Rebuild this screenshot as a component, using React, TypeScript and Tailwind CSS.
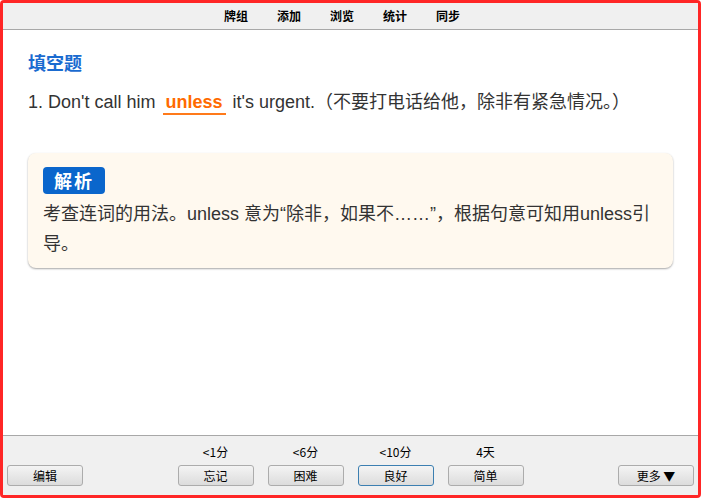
const tabs = ['牌组', '添加', '浏览', '统计', '同步'];

const answers = [
  { time: '<1分', label: '忘记' },
  { time: '<6分', label: '困难' },
  { time: '<10分', label: '良好', focus: true },
  { time: '4天', label: '简单' },
];

function Btn({ children, focus }: { children: React.ReactNode; focus?: boolean }) {
  return (
    <button
      className={
        'h-[21px] w-[76px] rounded-[3px] border bg-gradient-to-b from-[#f4f4f4] to-[#dcdcdc] text-[12px] leading-none text-black ' +
        (focus ? 'border-[#3c7fb1]' : 'border-[#acacac]')
      }
    >
      {children}
    </button>
  );
}

export default function App() {
  return (
    <div className="h-[501px] w-[704px] bg-white font-['Liberation_Sans','Noto_Sans_CJK_SC',sans-serif]">
      <div className="flex h-[498px] w-[701px] flex-col overflow-hidden rounded-[4px] border-[3px] border-[#ff2626] bg-white">
        <div className="flex h-[27px] shrink-0 items-center justify-center gap-[29px] border-b border-[#a8a8a8] bg-[#f0f0f0] pr-[17px] font-['Noto_Sans_CJK_SC',sans-serif] text-[12px] font-bold text-black">
          {tabs.map((t) => (
            <span key={t}>{t}</span>
          ))}
        </div>

        <div className="flex-1 px-[25px] pt-[20px]">
          <h3 className="font-['Noto_Sans_CJK_SC',sans-serif] text-[18px] font-bold leading-[24px] text-[#1a6bd0]">
            填空题
          </h3>
          <p className="mt-[15px] text-[18px] leading-[26px] text-[#333]">
            1. Don't call him{' '}
            <span className="mx-[2px] inline-block border-b-2 border-[#ff7a1a] px-[3px] font-bold leading-[22px] text-[#ff6a00]">
              unless
            </span>{' '}
            it's urgent.（不要打电话给他，除非有紧急情况。）
          </p>

          <div className="mt-[38px] rounded-[8px] bg-[#fff9ef] px-[15px] pb-[9px] pt-[14px] shadow-[0_1px_2px_rgba(0,0,0,0.35)]">
            <span className="inline-block rounded-[4px] bg-[#0a66cc] px-[11px] font-['Noto_Sans_CJK_SC',sans-serif] text-[18px] font-bold tracking-[2px] leading-[27px] text-white">
              解析
            </span>
            <p className="mt-[4px] text-[18px] leading-[30px] text-[#333]">
              考查连词的用法。unless 意为“除非，如果不……”，根据句意可知用unless引导。
            </p>
          </div>
        </div>

        <div className="flex h-[60px] shrink-0 items-end justify-between border-t border-[#a8a8a8] bg-[#f0f0f0] px-[4px] pb-[9px] font-['Noto_Sans_CJK_SC',sans-serif]">
          <Btn>编辑</Btn>
          <div className="flex gap-[14px]">
            {answers.map((a) => (
              <div key={a.label} className="flex flex-col items-center">
                <span className="mb-[6px] text-[12px] leading-[14px] text-black">{a.time}</span>
                <Btn focus={a.focus}>{a.label}</Btn>
              </div>
            ))}
          </div>
          <Btn>更多 ▼</Btn>
        </div>
      </div>
    </div>
  );
}
